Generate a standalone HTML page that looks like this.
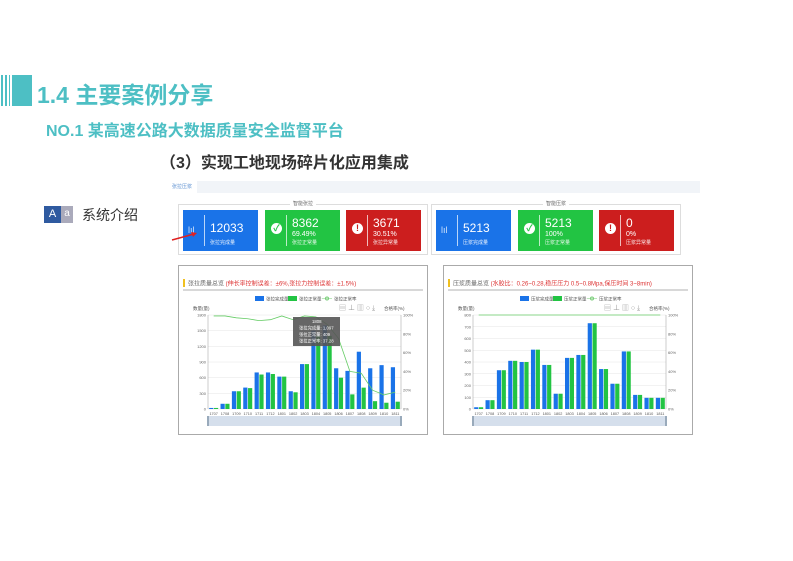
<!DOCTYPE html>
<html><head><meta charset="utf-8"><style>
body{margin:0;width:793px;height:561px;background:#fff;position:relative;overflow:hidden;font-family:"Liberation Sans","Noto Sans CJK SC",sans-serif}
.a{position:absolute}
.t1{left:37px;top:76px;font-size:23px;font-weight:bold;color:#4dbfc4;letter-spacing:0px}
.t2{left:46px;top:117px;font-size:16px;font-weight:bold;color:#4dbfc4}
.t3{left:160px;top:149px;font-size:16px;font-weight:bold;color:#333}
.card{position:absolute;height:41px;width:75px;color:#fff}
.card .sep{position:absolute;left:21px;top:5px;width:1px;height:31px;background:rgba(255,255,255,.7)}
.card .n{position:absolute;left:27px;top:6px;font-size:12px}
.card .p{position:absolute;left:27px;top:21px;font-size:7px}
.card .l{position:absolute;left:27px;top:29px;font-size:5px;opacity:.9}
.card .ic{position:absolute;left:6px;top:13px;width:11px;height:11px;border-radius:50%;background:#fff;font-size:9px;font-weight:bold;text-align:center;line-height:11px}
.grp{position:absolute;top:204px;height:49px;width:248px;border:1px solid #ddd}
.grp span{position:absolute;top:-5px;left:0;right:0;text-align:center;font-size:5px;color:#666}
.grp span b{background:#fff;padding:0 3px;font-weight:normal}
.box{position:absolute;top:265px;width:248px;height:168px;border:1px solid #aaa;background:#fff}
</style></head><body>
<div class="a" style="left:1px;top:75px;width:2px;height:31px;background:#4dbfc4"></div>
<div class="a" style="left:5px;top:75px;width:2px;height:31px;background:#4dbfc4"></div>
<div class="a" style="left:9px;top:75px;width:1px;height:31px;background:#4dbfc4"></div>
<div class="a" style="left:12px;top:75px;width:20px;height:31px;background:#4dbfc4"></div>
<div class="a t1">1.4 主要案例分享</div>
<div class="a t2">NO.1 某高速公路大数据质量安全监督平台</div>
<div class="a t3">（3）实现工地现场碎片化应用集成</div>
<div class="a" style="left:44px;top:206px;width:17px;height:17px;background:#2f5aa0;color:#fff;font-size:11px;text-align:center;line-height:17px">A</div>
<div class="a" style="left:61px;top:206px;width:12px;height:17px;background:#aab;color:#fff;font-size:10px;text-align:center;line-height:16px">a</div>
<div class="a" style="left:82px;top:205px;font-size:14px;color:#333">系统介绍</div>
<div class="a" style="left:172px;top:183px;font-size:5px;color:#5b8fd0">张拉压浆</div>
<div class="a" style="left:197px;top:181px;width:503px;height:12px;background:#f1f4f8"></div>
<div class="grp" style="left:178px"><span><b>智能张拉</b></span></div>
<div class="grp" style="left:431px"><span><b>智能压浆</b></span></div>
<div class="card" style="left:183px;top:210px;background:#1a73e8"><div class="a" style="left:5px;top:15px;font-size:9px;opacity:.8">lıl</div><div class="sep"></div><div class="n" style="top:11px">12033</div><div class="l">张拉完成量</div></div>
<div class="card" style="left:265px;top:210px;background:#22c443"><div class="ic" style="color:#22c443">✓</div><div class="sep"></div><div class="n">8362</div><div class="p">69.49%</div><div class="l">张拉正常量</div></div>
<div class="card" style="left:346px;top:210px;background:#cc1e1e"><div class="ic" style="color:#cc1e1e">!</div><div class="sep"></div><div class="n">3671</div><div class="p">30.51%</div><div class="l">张拉异常量</div></div>
<div class="card" style="left:436px;top:210px;background:#1a73e8"><div class="a" style="left:5px;top:15px;font-size:9px;opacity:.8">lıl</div><div class="sep"></div><div class="n" style="top:11px">5213</div><div class="l">压浆完成量</div></div>
<div class="card" style="left:518px;top:210px;background:#22c443"><div class="ic" style="color:#22c443">✓</div><div class="sep"></div><div class="n">5213</div><div class="p">100%</div><div class="l">压浆正常量</div></div>
<div class="card" style="left:599px;top:210px;background:#cc1e1e"><div class="ic" style="color:#cc1e1e">!</div><div class="sep"></div><div class="n">0</div><div class="p">0%</div><div class="l">压浆异常量</div></div>
<svg class="a" style="left:170px;top:228px" width="30" height="14"><line x1="2" y1="12" x2="24" y2="6" stroke="#e02020" stroke-width="1.5"/><polygon points="27,5 21,4 23,9" fill="#e02020"/></svg>
<div class="box" style="left:178px"><svg id="c1" width="248" height="168"></svg></div>
<div class="box" style="left:443px"><svg id="c2" width="248" height="168"></svg></div>
<script>
var cats=["1707","1708","1709","1710","1711","1712","1801","1802","1803","1804","1805","1806","1807","1808","1809","1810","1811"];
function draw(id,title,sub,max,step,b,g,l,names,tip){
var s='';
s+='<rect x="4" y="13" width="2" height="8" fill="#f0c020"/>';
s+='<text x="9" y="19.5" font-size="6" fill="#666">'+title+' <tspan fill="#d33">'+sub+'</tspan></text>';
s+='<line x1="4" y1="24" x2="244" y2="24" stroke="#999" stroke-width="0.7"/>';
s+='<rect x="76" y="30" width="9" height="5" fill="#1a73e8"/><text x="87" y="34.5" font-size="4.5" fill="#555">'+names[0]+'</text>';
s+='<rect x="109" y="30" width="9" height="5" fill="#22c443"/><text x="120" y="34.5" font-size="4.5" fill="#555">'+names[1]+'</text>';
s+='<circle cx="148" cy="32.5" r="1.5" fill="#fff" stroke="#7c7"/><line x1="143" y1="32.5" x2="153" y2="32.5" stroke="#7c7" stroke-width=".5"/><text x="155" y="34.5" font-size="4.5" fill="#555">'+names[2]+'</text>';
s+='<text x="14" y="44" font-size="4.5" fill="#555">数量(量)</text><text x="205" y="44" font-size="4.5" fill="#555">合格率(%)</text>';
s+='<text x="160" y="44" font-size="7" fill="#999">▤ ⊥ ▥ ○ ⤓</text>';
var x0=29,x1=222,y0=143,y1=49,H=y0-y1,W=(x1-x0)/17;
for(var i=0;i<=max/step;i++){var y=y0-H*i*step/max;s+='<line x1="'+x0+'" y1="'+y+'" x2="'+x1+'" y2="'+y+'" stroke="#e6e6e6" stroke-width=".5"/><text x="'+(x0-2)+'" y="'+(y+1.5)+'" font-size="4" fill="#666" text-anchor="end">'+i*step+'</text>';}
for(var k=0;k<=5;k++){var y=y0-H*k/5;s+='<text x="'+(x1+2)+'" y="'+(y+1.5)+'" font-size="4" fill="#666">'+k*20+'%</text>';}
s+='<line x1="'+x0+'" y1="'+y1+'" x2="'+x0+'" y2="'+y0+'" stroke="#999" stroke-width=".5"/><line x1="'+x1+'" y1="'+y1+'" x2="'+x1+'" y2="'+y0+'" stroke="#999" stroke-width=".5"/>';
var pts=[];
for(var i=0;i<17;i++){var cx=x0+W*(i+.5);
var hb=H*b[i]/max,hg=H*g[i]/max;
s+='<rect x="'+(cx-4.5)+'" y="'+(y0-hb)+'" width="4.2" height="'+hb+'" fill="#1a73e8"/>';
s+='<rect x="'+(cx+.3)+'" y="'+(y0-hg)+'" width="4.2" height="'+hg+'" fill="#22c443"/>';
s+='<text x="'+cx+'" y="'+(y0+6)+'" font-size="3.8" fill="#555" text-anchor="middle">'+cats[i]+'</text>';
pts.push(cx+','+(y0-H*l[i]/100));}
s+='<polyline points="'+pts.join(' ')+'" fill="none" stroke="#6c6" stroke-width=".8"/>';
if(tip){s+='<rect x="114" y="51" width="47" height="29" fill="#555" opacity=".9"/><text font-size="4.3" fill="#fff"><tspan x="133" y="57">1808</tspan><tspan x="120" y="63.5">张拉完成量: 1,097</tspan><tspan x="120" y="70">张拉正常量: 409</tspan><tspan x="120" y="76.5">张拉正常率: 37.28</tspan></text>';}
s+='<rect x="29" y="150" width="193" height="10" fill="#d5dfec"/><rect x="28" y="150" width="2" height="10" fill="#9ab"/><rect x="221" y="150" width="2" height="10" fill="#9ab"/>';
document.getElementById(id).innerHTML=s;}
draw('c1','张拉质量总览','(伸长率控制误差：±6%,张拉力控制误差：±1.5%)',1800,300,
[20,100,340,410,700,700,620,340,860,1500,1600,780,730,1097,780,840,800],
[20,100,340,400,660,670,620,320,860,1400,1400,600,280,409,150,120,140],
[99,99,97,96,94,95,99,95,99,98,90,75,40,38,20,15,18],['张拉完成量','张拉正常量','张拉正常率'],true);
var v=[15,75,330,410,400,505,375,130,435,460,730,340,215,490,120,95,95];
draw('c2','压浆质量总览','(水胶比：0.26~0.28,稳压压力 0.5~0.8Mpa,保压时间 3~8min)',800,100,v,v,
[100,100,100,100,100,100,100,100,100,100,100,100,100,100,100,100,100],['压浆完成量','压浆正常量','压浆正常率'],false);
</script>
</body></html>
